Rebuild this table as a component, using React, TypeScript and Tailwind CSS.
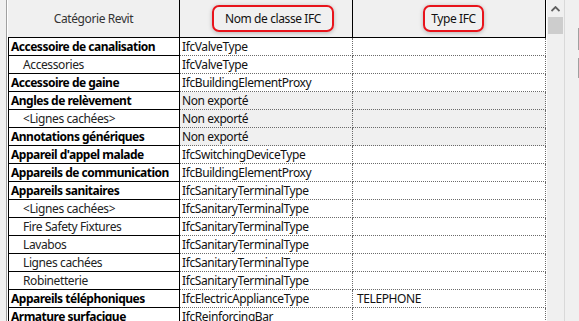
type Row = {
  cat: string;
  bold?: boolean;
  ifc: string;
  type?: string;
  off?: boolean;
};

const rows: Row[] = [
  { cat: "Accessoire de canalisation", bold: true, ifc: "IfcValveType" },
  { cat: "Accessories", ifc: "IfcValveType" },
  { cat: "Accessoire de gaine", bold: true, ifc: "IfcBuildingElementProxy" },
  { cat: "Angles de relèvement", bold: true, ifc: "Non exporté", off: true },
  { cat: "<Lignes cachées>", ifc: "Non exporté", off: true },
  { cat: "Annotations génériques", bold: true, ifc: "Non exporté", off: true },
  { cat: "Appareil d'appel malade", bold: true, ifc: "IfcSwitchingDeviceType" },
  { cat: "Appareils de communication", bold: true, ifc: "IfcBuildingElementProxy" },
  { cat: "Appareils sanitaires", bold: true, ifc: "IfcSanitaryTerminalType" },
  { cat: "<Lignes cachées>", ifc: "IfcSanitaryTerminalType" },
  { cat: "Fire Safety Fixtures", ifc: "IfcSanitaryTerminalType" },
  { cat: "Lavabos", ifc: "IfcSanitaryTerminalType" },
  { cat: "Lignes cachées", ifc: "IfcSanitaryTerminalType" },
  { cat: "Robinetterie", ifc: "IfcSanitaryTerminalType" },
  { cat: "Appareils téléphoniques", bold: true, ifc: "IfcElectricApplianceType", type: "TELEPHONE" },
  { cat: "Armature surfacique", bold: true, ifc: "IfcReinforcingBar" },
];

const font = { fontFamily: '"Noto Sans", "Open Sans", sans-serif' };

// red hand-drawn style highlight around a header label
function Marked({ children, shift }: { children: React.ReactNode; shift: string }) {
  return (
    <span
      className={`rounded-[7px] border-2 border-[#e8141c] py-[3px] shadow-[0_1px_4px_rgba(0,0,0,0.25)] ${shift}`}
    >
      {children}
    </span>
  );
}

export default function App() {
  return (
    <div
      className="flex h-[321px] w-[579px] overflow-hidden bg-[#f0f0f0] text-[12px] leading-[17px] tracking-[-0.4px] text-[#111]"
      style={font}
    >
      {/* left gutter */}
      <div className="w-[6px] shrink-0 bg-[#f0f0f0]" />
      <div className="w-px shrink-0 bg-[#a0a0a0]" />
      <div className="w-px shrink-0 bg-white" />

      {/* grid */}
      <div className="w-[538px] shrink-0 bg-white">
        <div className="grid h-[38px] grid-cols-[172px_173px_193px] border-b border-black bg-[#f0f0f0]">
          <div className="flex items-center justify-center border-r border-black text-[#333]">
            Catégorie Revit
          </div>
          <div className="flex items-center justify-center border-r border-black">
            <Marked shift="ml-[14px] px-[11px]">Nom de classe IFC</Marked>
          </div>
          <div className="flex items-center justify-center border-r border-black">
            <Marked shift="ml-[9px] px-[6px]">Type IFC</Marked>
          </div>
        </div>
        {rows.map((r, i) => (
          <div key={i} className="grid h-[18px] grid-cols-[172px_173px_193px]">
            <div
              className={`overflow-hidden whitespace-nowrap border-b border-l border-r border-black ${
                r.bold ? "pl-[2px] font-bold tracking-[-0.5px] text-black" : "pl-[14px] text-[#222]"
              }`}
            >
              {r.cat}
            </div>
            <div
              className={`overflow-hidden whitespace-nowrap border-b border-r border-dotted border-[#6a6a6a] pl-[2px] ${
                r.off ? "bg-[#f0f0f0]" : "bg-white"
              }`}
            >
              {r.ifc}
            </div>
            <div
              className={`overflow-hidden whitespace-nowrap border-b border-r border-dotted border-[#6a6a6a] pl-[4px] ${
                r.off ? "bg-[#f0f0f0]" : "bg-white"
              }`}
            >
              {r.type ?? ""}
            </div>
          </div>
        ))}
      </div>

      {/* vertical scrollbar */}
      <div className="w-px shrink-0 bg-white" />
      <div className="flex w-[17px] shrink-0 flex-col items-center bg-[#f0f0f0]">
        <svg width="9" height="6" viewBox="0 0 9 6" className="mt-[6px]">
          <path d="M0.5 5 L4.5 1 L8.5 5" fill="none" stroke="#606060" strokeWidth="1.8" />
        </svg>
        <div className="mt-[5px] h-[17px] w-[15px] bg-[#cdcdcd]" />
      </div>

      {/* neighbouring panel edge */}
      <div className="w-px shrink-0 bg-[#d9d9d9]" />
      <div className="flex flex-1 justify-end bg-[#f0f0f0]">
        <div className="flex w-px flex-col">
          <div className="h-[28px]" />
          <div className="h-[22px] bg-[#a0a0a0]" />
          <div className="h-[8px]" />
          <div className="h-[20px] bg-[#a0a0a0]" />
        </div>
      </div>
    </div>
  );
}
